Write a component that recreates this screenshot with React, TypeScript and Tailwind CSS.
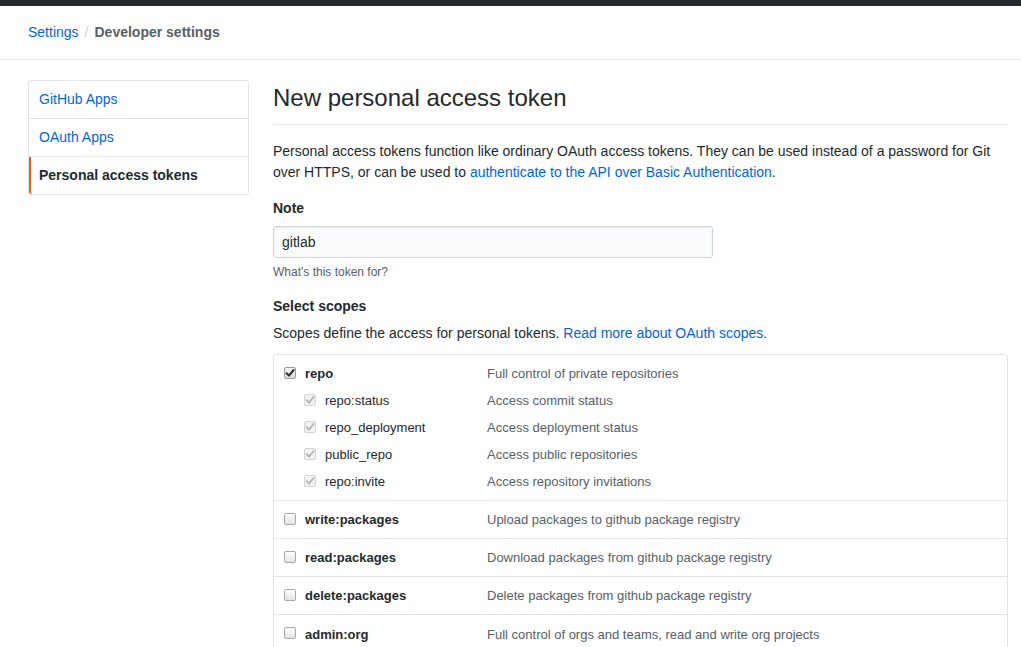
import React from "react";

type Kind = "checked" | "disabled" | "unchecked";

function Box({ kind }: { kind: Kind }) {
  if (kind === "unchecked") {
    return (
      <span className="block -mt-[2px] w-[12px] h-[12px] rounded-[2px] border border-[#a9a9a9] bg-gradient-to-b from-[#ffffff] to-[#e3e3e3]" />
    );
  }
  const disabled = kind === "disabled";
  return (
    <span
      className={
        disabled
          ? "relative block -mt-[2px] w-[12px] h-[12px] rounded-[2px] border border-[#d4d4d4] bg-[#f1f1f1]"
          : "relative block -mt-[2px] w-[12px] h-[12px] rounded-[2px] border border-[#9c9c9c] bg-gradient-to-b from-[#f4f4f4] to-[#d9d9d9]"
      }
    >
      <svg viewBox="0 0 12 12" className="absolute left-[-1px] top-[-1px] w-[12px] h-[12px]">
        <path
          d="M2.6 6.2 L5 8.6 L9.6 3"
          fill="none"
          stroke={disabled ? "#b4b4b4" : "#2e2e2e"}
          strokeWidth={disabled ? 1.7 : 2}
          strokeLinecap="round"
          strokeLinejoin="round"
        />
      </svg>
    </span>
  );
}

const subs = [
  ["repo:status", "Access commit status"],
  ["repo_deployment", "Access deployment status"],
  ["public_repo", "Access public repositories"],
  ["repo:invite", "Access repository invitations"],
];

const rows = [
  ["write:packages", "Upload packages to github package registry"],
  ["read:packages", "Download packages from github package registry"],
  ["delete:packages", "Delete packages from github package registry"],
  ["admin:org", "Full control of orgs and teams, read and write org projects"],
];

export default function App() {
  return (
    <div
      className="w-[1021px] h-[647px] overflow-hidden bg-white text-[#24292e] text-[14px] leading-[21px]"
      style={{ fontFamily: '"Liberation Sans", Arial, Helvetica, sans-serif' }}
    >
      <div className="h-[6px] bg-[#24292e]" />
      <div className="h-[54px] border-b border-[#e1e4e8] flex items-center pl-[28px]">
        <a className="text-[#0366d6]">Settings</a>
        <span className="mx-[6px] text-[#d1d5da]">/</span>
        <span className="font-bold text-[#586069]">Developer settings</span>
      </div>

      <div className="flex pl-[28px] pt-[20px]">
        <nav className="w-[221px] shrink-0 self-start border border-[#e1e4e8] rounded-[3px]">
          <div className="px-[10px] py-[8px] h-[38px] border-b border-[#e1e4e8] text-[#0366d6]">GitHub Apps</div>
          <div className="px-[10px] py-[8px] h-[38px] border-b border-[#e1e4e8] text-[#0366d6]">OAuth Apps</div>
          <div className="pl-[8px] pr-[10px] py-[8px] h-[37px] border-l-[2px] border-[#e36209] rounded-bl-[3px] font-bold text-[#24292e]">
            Personal access tokens
          </div>
        </nav>

        <main className="ml-[24px] w-[735px]">
          <h1 className="text-[24px] leading-[36px] font-normal pb-[8px] border-b border-[#e1e4e8]">
            New personal access token
          </h1>
          <p className="mt-[16px]">
            Personal access tokens function like ordinary OAuth access tokens. They can be used instead of a password for Git
            over HTTPS, or can be used to{" "}
            <a className="text-[#0366d6]">authenticate to the API over Basic Authentication</a>.
          </p>

          <div className="mt-[15px] font-bold">Note</div>
          <div className="mt-[7px] w-[440px] h-[32px] border border-[#d1d5da] rounded-[3px] bg-[#fafbfc] px-[8px] flex items-center shadow-[inset_0_1px_2px_rgba(27,31,35,0.075)]">
            gitlab
          </div>
          <div className="mt-[5px] text-[12px] leading-[18px] text-[#586069]">What's this token for?</div>

          <div className="mt-[15px] font-bold">Select scopes</div>
          <p className="mt-[6px]">
            Scopes define the access for personal tokens.{" "}
            <a className="text-[#0366d6]">Read more about OAuth scopes.</a>
          </p>

          <div className="mt-[10px] border border-[#e1e4e8] rounded-[3px] text-[13px]">
            <div className="py-[5px] border-b border-[#e1e4e8]">
              <div className="flex items-center h-[27px] pl-[10px]">
                <Box kind="checked" />
                <span className="ml-[9px] w-[182px] font-bold">repo</span>
                <span className="text-[#586069]">Full control of private repositories</span>
              </div>
              {subs.map(([n, d]) => (
                <div key={n} className="flex items-center h-[27px] pl-[30px]">
                  <Box kind="disabled" />
                  <span className="ml-[9px] w-[162px]">{n}</span>
                  <span className="text-[#586069]">{d}</span>
                </div>
              ))}
            </div>
            {rows.map(([n, d], i) => (
              <div
                key={n}
                className={
                  "flex items-center h-[38px] pl-[10px] " + (i < rows.length - 1 ? "border-b border-[#e1e4e8]" : "")
                }
              >
                <Box kind="unchecked" />
                <span className="ml-[9px] w-[182px] font-bold">{n}</span>
                <span className="text-[#586069]">{d}</span>
              </div>
            ))}
          </div>
        </main>
      </div>
    </div>
  );
}
